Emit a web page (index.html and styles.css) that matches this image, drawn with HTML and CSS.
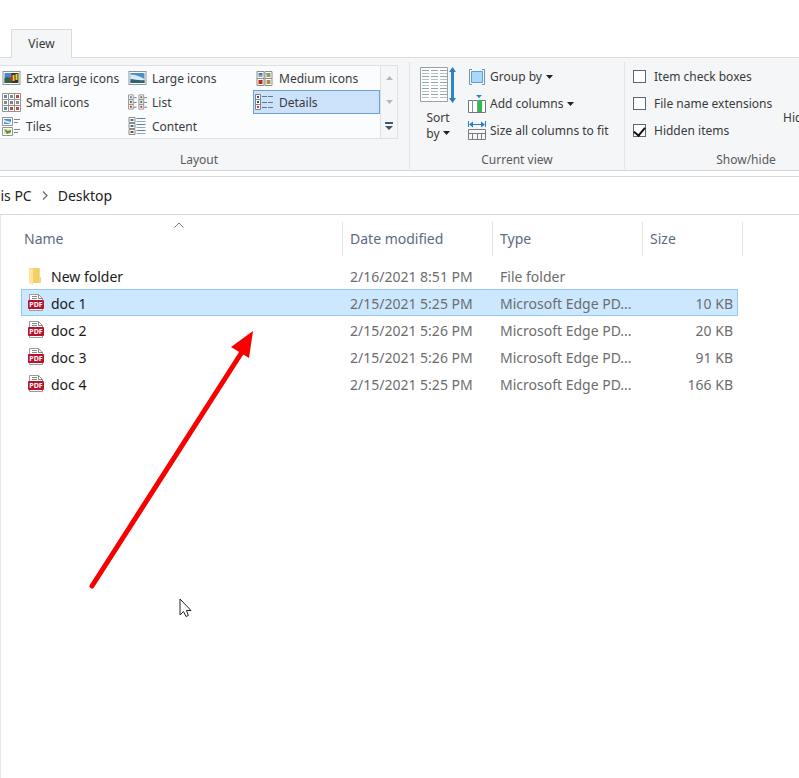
FILE: index.html
```html
<!DOCTYPE html>
<html lang="en">
  <head>
    <meta charset="UTF-8" />
    <meta name="viewport" content="width=device-width, initial-scale=1.0" />
    <title>Desktop</title>
    <link rel="stylesheet" href="styles.css">
  </head>
  <body>
    <div class="window">
      <nav class="tabs">
        <button class="tab" type="button">View</button>
      </nav>

      <div class="ribbon">
        <section class="group group-layout">
          <div class="gallery">
            <div class="gallery-items">
              <button class="item" type="button">
                <svg width="18" height="14" viewBox="0 0 18 14"><rect x=".5" y=".5" width="17" height="13" fill="#fff" stroke="#8f9499"/><path d="M2 2h8v10H2z" fill="#4c86d0"/><path d="M2 7l3-1 4 2v4H2z" fill="#28684a"/><path d="M9 2h7v10H9z" fill="#3a3422"/><path d="M10 4h2v6h-2zM13 3h2v6h-2z" fill="#f0d22c"/><path d="M7 6h3v4H7z" fill="#b8332c"/></svg>
                Extra large icons
              </button>
              <button class="item" type="button">
                <svg width="18" height="14" viewBox="0 0 18 14"><rect x=".5" y=".5" width="17" height="13" fill="#fff" stroke="#8f9499"/><path d="M2 2h14v10H2z" fill="#4c8fc9"/><path d="M2 4c4-1 8 1 14 4v2H2z" fill="#d9ebf7"/><path d="M2 8c4 0 8 2 14 1v3H2z" fill="#2e6470"/></svg>
                Large icons
              </button>
              <button class="item" type="button">
                <svg width="18" height="15" viewBox="0 0 18 15"><g fill="#fff" stroke="#8f8a86"><path d="M1.500.5h7v7h-7zM9.500.5h7v7h-7zM1.500 7.500h7v7h-7zM9.500 7.500h7v7h-7z"/></g><path d="M3 2h4v2H3z" fill="#3c7fc0"/><path d="M3 4h4v2H3z" fill="#7fa9ab"/><path d="M11 2h4v4h-4z" fill="#9d9b55"/><path d="M11 2h2v2h-2z" fill="#5b9bc8"/><path d="M3 9h4v4H3z" fill="#b32e22"/><path d="M11 9h4v4h-4z" fill="#a29150"/></svg>
                Medium icons
              </button>
              <button class="item" type="button">
                <svg width="19" height="19" viewBox="0 0 19 19"><g fill="#fff" stroke="#9a9289"><path d="M.5.5h6v6h-6zM6.500.5h6v6h-6zM12.500.5h6v6h-6zM.5 6.500h6v6h-6zM6.500 6.500h6v6h-6zM12.500 6.500h6v6h-6zM.5 12.500h6v6h-6zM6.500 12.500h6v6h-6zM12.500 12.500h6v6h-6z"/></g><path d="M2 2h3v3H2zM8 8h3v3H8zM2 14h3v3H2z" fill="#5f88b0"/><path d="M8 2h3v3H8zM2 8h3v3H2zM14 8h3v3h-3z" fill="#7d9083"/><path d="M14 2h3v3h-3zM8 14h3v3H8zM14 14h3v3h-3z" fill="#b34a44"/></svg>
                Small icons
              </button>
              <button class="item" type="button">
                <svg width="20" height="16" viewBox="0 0 20 16"><g fill="#fff" stroke="#9a9289"><path d="M.5.5h5v5h-5zM.5 5.500h5v5h-5zM.5 10.500h5v5h-5zM11.500.5h5v5h-5zM11.500 5.500h5v5h-5zM11.500 10.500h5v5h-5z"/></g><path d="M6 3.500h3M6 8.500h3M6 13.500h3M17 3.500h3M17 8.500h3M17 13.500h3" stroke="#6d7a85"/><path d="M2 2h2v2H2zM13 7h2v2h-2z" fill="#3f78b0"/><path d="M2 7h2v2H2zM13 2h2v2h-2z" fill="#5d6c53"/><path d="M2 12h2v2H2zM13 12h2v2h-2z" fill="#b33a34"/></svg>
                List
              </button>
              <button class="item selected" type="button">
                <svg width="19" height="16" viewBox="0 0 19 16"><g fill="#fff" stroke="#7d8389"><path d="M.5.5h5v5h-5zM.5 5.500h5v5h-5zM.5 10.500h5v5h-5z"/></g><path d="M2 2h2v2H2zM2 7h2v2H2z" fill="#3d5064"/><path d="M2 12h2v2H2z" fill="#b33a34"/><path d="M7 2.500h5M13 2.500h5M7 8.500h5M13 8.500h5M7 13.500h5M13 13.500h5" stroke="#5c7893"/></svg>
                Details
              </button>
              <button class="item" type="button">
                <svg width="19" height="19" viewBox="0 0 19 19"><g fill="#fff" stroke="#8f9499"><path d="M.5.5h10v8H.5zM.5 10.500h10v8H.5z"/></g><path d="M2 2h7v5H2z" fill="#4c8fc9"/><path d="M2 3l7 2v2l-7-2z" fill="#d9ebf7"/><path d="M2 12h7v5H2z" fill="#e0e4b5"/><path d="M2 12l4 2 3-1v2l-4 2z" fill="#5d8b35"/><path d="M12 2.500h6M12 5.500h4M12 12.500h6M12 15.500h4" stroke="#7e858b"/></svg>
                Tiles
              </button>
              <button class="item" type="button">
                <svg width="18" height="19" viewBox="0 0 18 19"><g fill="#fff" stroke="#8f8a86"><path d="M.5.5h6v5h-6zM.5 6.500h6v5h-6zM.5 12.500h6v5h-6z"/></g><path d="M2 2h3v2H2zM2 8h3v2H2z" fill="#4a6d92"/><path d="M2 14h3v2H2z" fill="#65594f"/><path d="M8 1.500h9M8 7.500h9M8 13.500h9" stroke="#4b84b5"/><path d="M8 4.500h9M8 10.500h9M8 16.500h9" stroke="#9fa7ad"/></svg>
                Content
              </button>
            </div>
            <div class="gallery-scroll">
              <button type="button" aria-label="Up"><svg width="7" height="4"><path d="M0 4l3.500-4L7 4z" fill="#b4b7bc"/></svg></button>
              <button type="button" aria-label="Down"><svg width="7" height="4"><path d="M0 0h7L3.500 4z" fill="#b4b7bc"/></svg></button>
              <button type="button" aria-label="More"><svg width="8" height="8"><path d="M0 0h8v2H0zM0 4h8L4 8z" fill="#45556b"/></svg></button>
            </div>
          </div>
          <h2 class="group-name">Layout</h2>
        </section>

        <section class="group group-view">
          <div class="group-body">
            <button class="sort" type="button">
              <svg width="36" height="36" viewBox="0 0 36 36"><path d="M.5.5h27v34H.5z" fill="#fff" stroke="#9aa0a5"/><g stroke="#8fa6a9" stroke-dasharray="7 2"><path d="M2 3.500h25M2 9.500h25M2 15.500h25M2 21.500h25M2 27.500h25"/></g><g stroke="#b4c3c8" stroke-dasharray="7 2"><path d="M2 6.500h25M2 12.500h25M2 18.500h25M2 24.500h25M2 30.500h25"/></g><path d="M32.500 4v28" stroke="#2e86c8" stroke-width="3"/><path d="M29 5l3.500-5L36 5zM29 31l3.500 5 3.500-5z" fill="#2e7dbd"/></svg>
              <span class="sort-text">Sort<br>by <svg class="caret" width="7" height="4"><path d="M0 0h7L3.500 4z"/></svg></span>
            </button>
            <div class="commands">
              <button class="command" type="button">
                <svg width="18" height="16" viewBox="0 0 18 16"><path d="M4 .5H1.500v15H4M14 .5h2.500v15H14" fill="none" stroke="#7890a5"/><path d="M3.500 2.500h11v11h-11z" fill="#a9d8fb" stroke="#5c9fd3"/></svg>
                Group by <svg class="caret" width="7" height="4"><path d="M0 0h7L3.500 4z"/></svg>
              </button>
              <button class="command" type="button">
                <svg width="18" height="18" viewBox="0 0 18 18"><path d="M.5 5.500h17v12H.5z" fill="#fff" stroke="#70777d"/><path d="M4.500 5v12M9.500 5v12" stroke="#8b9297"/><path d="M10 5h4v12h-4z" fill="#2bbd45"/><path d="M8 0h6l-3 3z" fill="#2e7dbd"/></svg>
                Add columns <svg class="caret" width="7" height="4"><path d="M0 0h7L3.500 4z"/></svg>
              </button>
              <button class="command" type="button">
                <svg width="18" height="19" viewBox="0 0 18 19"><path d="M.5 0v6M17.500 0v6M2 3.500h14" stroke="#2e7dbd"/><path d="M1 3.500l4-3v6zM17 3.500l-4-3v6z" fill="#2e7dbd"/><path d="M.5 8.500h17v10H.5zM0 12.500h18M4.500 12v6M9.500 12v6M13.500 12v6" fill="none" stroke="#777d82"/></svg>
                Size all columns to fit
              </button>
            </div>
          </div>
          <h2 class="group-name">Current view</h2>
        </section>

        <section class="group group-show">
          <div class="group-body">
            <div class="checks">
              <label class="check"><input type="checkbox" /> Item check boxes</label>
              <label class="check"><input type="checkbox" /> File name extensions</label>
              <label class="check"><input type="checkbox" checked /> Hidden items</label>
            </div>
            <button class="hide-selected" type="button">Hide selected<br>items</button>
          </div>
          <h2 class="group-name">Show/hide</h2>
        </section>
      </div>

      <nav class="address">
        <a href="#">This PC</a>
        <svg width="6" height="9" viewBox="0 0 6 9"><path d="M1 .5l4 4-4 4" fill="none" stroke="#777" stroke-width="1.500"/></svg>
        <a href="#">Desktop</a>
      </nav>

      <main class="content">
        <table class="files">
          <colgroup>
            <col class="col-name" />
            <col class="col-date" />
            <col class="col-type" />
            <col class="col-size" />
          </colgroup>
          <thead>
            <tr>
              <th>Name
                <svg class="sorted" width="10" height="6" viewBox="0 0 10 6"><path d="M.5 5.500L5 1l4.500 4.500" fill="none" stroke="#777"/></svg>
              </th>
              <th>Date modified</th>
              <th>Type</th>
              <th>Size</th>
            </tr>
          </thead>
          <tbody>
            <tr>
              <td><span class="file"><svg width="16" height="18" viewBox="0 0 16 18"><path d="M1 1h10v15H1z" fill="#f3cf6b"/><path d="M1 1l4 1v16l-4-2z" fill="#ffe49a"/><path d="M11 1h1v9h-1z" fill="#f7dc8c"/><path d="M11 10h2v6h-2z" fill="#f5d67c"/></svg>New folder</span></td>
              <td>2/16/2021 8:51 PM</td>
              <td>File folder</td>
              <td></td>
            </tr>
            <tr class="selected">
              <td><span class="file"><svg width="16" height="18" viewBox="0 0 16 18"><path d="M1.500.5h9l4 4v12h-13z" fill="#fff" stroke="#9a9a9a"/><path d="M10.500.5v4h4M4 2.500h5M4 4.500h5" fill="none" stroke="#8b8b8b"/><rect y="6" width="16" height="9" rx="1" fill="#b9122a"/><text x="8" y="13" text-anchor="middle" class="pdf-text">PDF</text></svg>doc 1</span></td>
              <td>2/15/2021 5:25 PM</td>
              <td>Microsoft Edge PD...</td>
              <td>10 KB</td>
            </tr>
            <tr>
              <td><span class="file"><svg width="16" height="18" viewBox="0 0 16 18"><path d="M1.500.5h9l4 4v12h-13z" fill="#fff" stroke="#9a9a9a"/><path d="M10.500.5v4h4M4 2.500h5M4 4.500h5" fill="none" stroke="#8b8b8b"/><rect y="6" width="16" height="9" rx="1" fill="#b9122a"/><text x="8" y="13" text-anchor="middle" class="pdf-text">PDF</text></svg>doc 2</span></td>
              <td>2/15/2021 5:26 PM</td>
              <td>Microsoft Edge PD...</td>
              <td>20 KB</td>
            </tr>
            <tr>
              <td><span class="file"><svg width="16" height="18" viewBox="0 0 16 18"><path d="M1.500.5h9l4 4v12h-13z" fill="#fff" stroke="#9a9a9a"/><path d="M10.500.5v4h4M4 2.500h5M4 4.500h5" fill="none" stroke="#8b8b8b"/><rect y="6" width="16" height="9" rx="1" fill="#b9122a"/><text x="8" y="13" text-anchor="middle" class="pdf-text">PDF</text></svg>doc 3</span></td>
              <td>2/15/2021 5:26 PM</td>
              <td>Microsoft Edge PD...</td>
              <td>91 KB</td>
            </tr>
            <tr>
              <td><span class="file"><svg width="16" height="18" viewBox="0 0 16 18"><path d="M1.500.5h9l4 4v12h-13z" fill="#fff" stroke="#9a9a9a"/><path d="M10.500.5v4h4M4 2.500h5M4 4.500h5" fill="none" stroke="#8b8b8b"/><rect y="6" width="16" height="9" rx="1" fill="#b9122a"/><text x="8" y="13" text-anchor="middle" class="pdf-text">PDF</text></svg>doc 4</span></td>
              <td>2/15/2021 5:25 PM</td>
              <td>Microsoft Edge PD...</td>
              <td>166 KB</td>
            </tr>
          </tbody>
        </table>
      </main>

      <svg class="arrow" width="176" height="266" viewBox="0 0 176 266">
        <path d="M12 261L162 27" stroke="#f80000" stroke-width="5" stroke-linecap="round"/>
        <path d="M173 6l-22 16 18 11z" fill="#f80000"/>
      </svg>
      <svg class="cursor" width="13" height="20" viewBox="0 0 13 20">
        <path d="M1 1v16l3.500-3.500L7 18.500l2.300-1L7.500 12.500h4.500z" fill="#fff" stroke="#222"/>
      </svg>
    </div>
  </body>
</html>
```
FILE: styles.css
```css
* {
  margin: 0;
  padding: 0;
  box-sizing: border-box;
}

body {
  font-family: "Noto Sans", "Open Sans", sans-serif;
  font-size: 12px;
  color: #3a3a3a;
  background: #fff;
}

button {
  font: inherit;
  color: inherit;
  background: none;
  border: none;
}

svg {
  flex-shrink: 0;
}

.pdf-text {
  font-size: 7px;
  font-weight: 700;
  fill: #fff;
}

.window {
  position: relative;
  display: flex;
  flex-direction: column;
  min-height: 100vh;
  overflow: hidden;
}

/* Tabs */
.tabs {
  display: flex;
  align-items: flex-end;
  height: 58px;
  padding-left: 11px;
  border-bottom: 1px solid #dadbdc;
}

.tab {
  width: 61px;
  height: 29px;
  margin-bottom: -1px;
  padding-bottom: 2px;
  background: #f5f6f7;
  border: 1px solid #dadbdc;
  border-bottom: none;
}

/* Ribbon */
.ribbon {
  display: flex;
  height: 113px;
  background: #f5f6f7;
  border-bottom: 1px solid #d5d7d9;
}

.group {
  display: flex;
  flex-direction: column;
  flex-shrink: 0;
  justify-content: space-between;
  margin: 4px 0 1px;
  padding-top: 3px;
  border-right: 1px solid #e2e3e4;
}

.group-layout {
  width: 410px;
  padding-right: 11px;
}

.group-view {
  width: 215px;
}

.group-show {
  width: 243px;
}

.group-body {
  display: flex;
}

.group-name {
  font-size: 12px;
  font-weight: 400;
  line-height: 18px;
  text-align: center;
  color: #5a5a5a;
}

.gallery {
  display: flex;
  border: 1px solid #dfe0e2;
  border-left: none;
  background: #fbfcfd;
}

.gallery-items {
  display: grid;
  flex: 1;
  grid-template-columns: 126px 127px 127px;
  grid-auto-rows: 24px;
}

.item {
  display: flex;
  align-items: center;
  gap: 5px;
  padding-left: 1px;
  border: 1px solid transparent;
  white-space: nowrap;
}

.item svg {
  width: 19px;
}

.item.selected {
  background: #cce2fb;
  border-color: #6ba3d6;
}

.gallery-scroll {
  display: grid;
  grid-template-rows: repeat(3, 1fr);
  width: 17px;
  border-left: 1px solid #dfe0e2;
  background: #f5f6f7;
}

.gallery-scroll button {
  display: flex;
  align-items: center;
  justify-content: center;
}

.sort {
  display: flex;
  flex-direction: column;
  align-items: center;
  gap: 7px;
  width: 56px;
  padding-top: 2px;
}

.sort-text {
  line-height: 16px;
}

.caret {
  fill: #222;
  vertical-align: 3px;
}

.commands,
.checks {
  margin-top: -2px;
  white-space: nowrap;
}

.command {
  display: flex;
  align-items: center;
  gap: 4px;
  height: 27px;
  padding-left: 2px;
}

.checks {
  width: 150px;
  padding-left: 8px;
}

.check {
  display: flex;
  align-items: center;
  gap: 8px;
  height: 27px;
}

.check input {
  display: flex;
  justify-content: center;
  align-items: flex-start;
  appearance: none;
  width: 13px;
  height: 13px;
  border: 1px solid #5b6675;
  background: #fff;
}

.check input:checked::before {
  content: "";
  width: 5px;
  height: 9px;
  border: solid #111;
  border-width: 0 2px 2px 0;
  transform: rotate(40deg);
}

.hide-selected {
  flex: 1;
  padding-top: 42px;
}

/* Address bar */
.address {
  display: flex;
  align-items: center;
  gap: 10px;
  height: 39px;
  margin-top: 5px;
  padding-bottom: 1px;
  border-top: 1px solid #d9d9d9;
  border-bottom: 1px solid #d9d9d9;
  font-size: 14px;
}

.address a {
  color: #222;
  text-decoration: none;
}

.address a:first-child {
  margin-left: -16px;
}

/* File list */
.content {
  flex: 1;
  padding: 7px 0 0 20px;
  border-left: 1px solid #e8e8e8;
}

.files {
  table-layout: fixed;
  width: 717px;
  border-collapse: separate;
  border-spacing: 0;
  font-size: 14px;
  color: #6d6d6d;
}

.col-name {
  width: 322px;
}

.col-date,
.col-type {
  width: 150px;
}

.files th {
  position: relative;
  height: 34px;
  padding: 0 0 2px 7px;
  border-right: 1px solid #e2e2e2;
  font-weight: 400;
  text-align: left;
  color: #5c6b80;
}

.files th:first-child {
  padding-left: 3px;
}

.files th:last-child {
  border-right: none;
}

/* Last divider stands past the end of the rows */
.files th:last-child::after {
  content: "";
  position: absolute;
  top: 0;
  right: -5px;
  height: 34px;
  border-right: 1px solid #e2e2e2;
}

.sorted {
  position: absolute;
  top: 0;
  left: 153px;
}

.files tbody::before {
  content: "";
  display: block;
  height: 6px;
}

.files td {
  height: 27px;
  padding: 2px 0 0 7px;
  border: solid transparent;
  border-width: 1px 0;
  line-height: 20px;
  white-space: nowrap;
}

.files td:first-child {
  padding-left: 6px;
  border-left-width: 1px;
  color: #1a1a1a;
}

.files td:last-child {
  padding-right: 4px;
  border-right-width: 1px;
  text-align: right;
}

.files .selected td {
  background: #cce8ff;
  border-color: #99c9ea;
}

.file {
  display: flex;
  align-items: center;
  gap: 7px;
}

.file svg {
  margin-bottom: 2px;
}

/* Pointer and arrow over the list */
.arrow {
  position: absolute;
  top: 325px;
  left: 80px;
}

.cursor {
  position: absolute;
  top: 598px;
  left: 179px;
}
```
